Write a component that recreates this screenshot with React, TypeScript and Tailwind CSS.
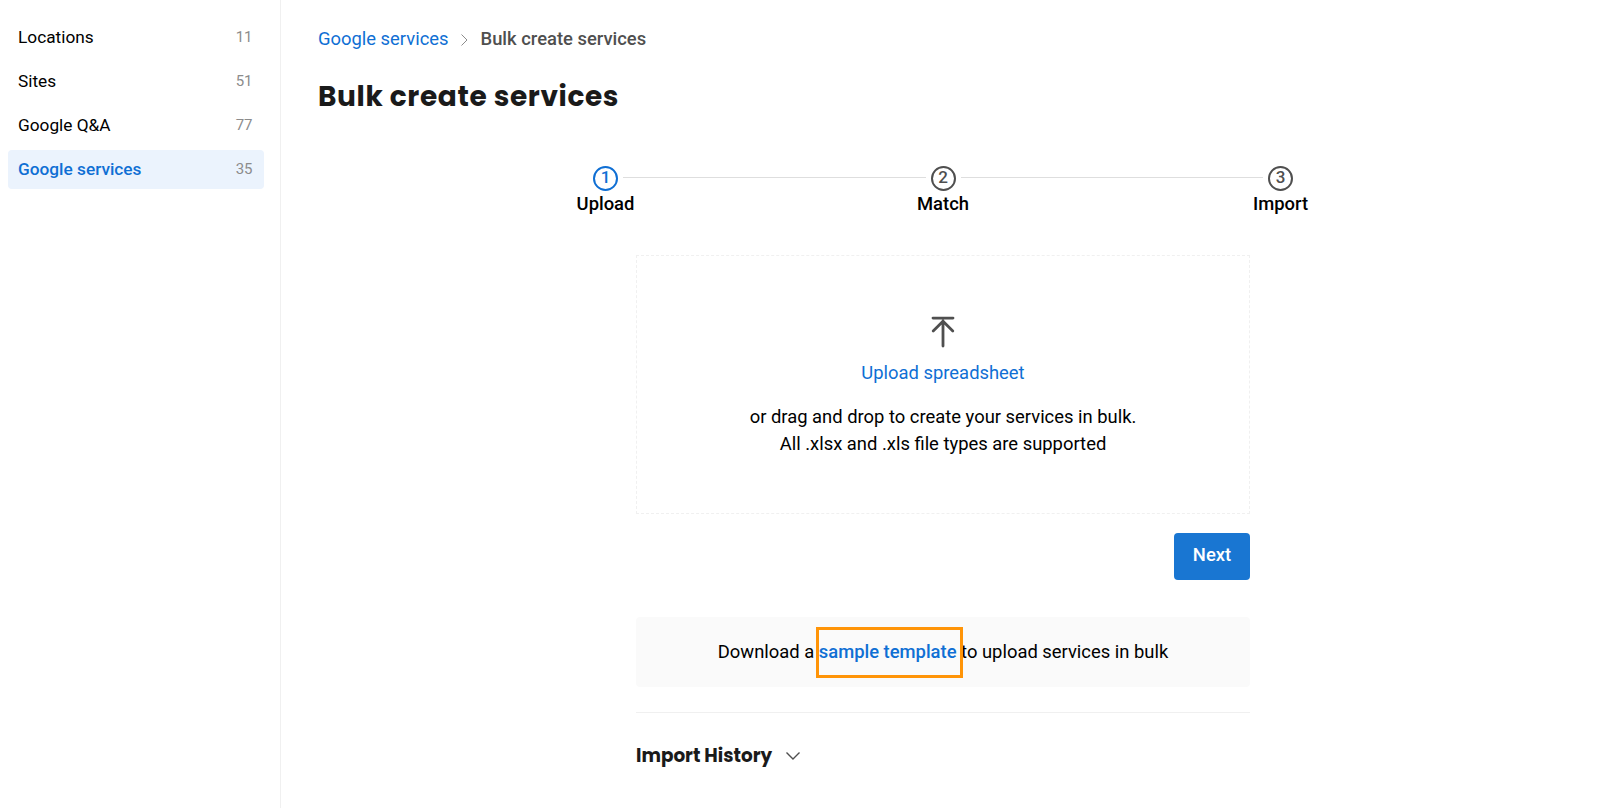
import { Fragment } from "react";
import clsx from "clsx";

const NAV_ITEMS = [
  { label: "Locations", count: 11 },
  { label: "Sites", count: 51 },
  { label: "Google Q&A", count: 77 },
  { label: "Google services", count: 35, active: true },
];

const STEPS = [
  { label: "Upload", active: true },
  { label: "Match", active: false },
  { label: "Import", active: false },
];

function Sidebar() {
  return (
    <aside className="w-[281px] shrink-0 border-r border-[#f0f0f0] pt-[18px] pr-4 pl-2">
      <nav className="flex flex-col gap-[5px]">
        {NAV_ITEMS.map((item) => (
          <a
            key={item.label}
            href="#"
            className={clsx(
              "flex h-[39px] items-center justify-between rounded pr-[11.5px] pl-2.5 text-[17.25px]",
              item.active ? "bg-[#ebf3fd] font-medium text-[#0f6fd4]" : "text-black",
            )}
          >
            <span>{item.label}</span>
            <span className="text-[15px] font-normal text-[#8c8c8c]">{item.count}</span>
          </a>
        ))}
      </nav>
    </aside>
  );
}

function Breadcrumbs() {
  return (
    <div className="flex h-6 items-center text-[18.4px]">
      <a href="#" className="text-[#0f6fd4]">
        Google services
      </a>
      <svg className="mx-[12.5px] mt-px h-3 w-[7px]" viewBox="0 0 7 12" fill="none" stroke="#8c8c8c">
        <path d="M0.5 0.5 6 6 0.5 11.5" />
      </svg>
      <span className="font-medium text-[#4f4f4f]">Bulk create services</span>
    </div>
  );
}

function Stepper() {
  return (
    <div className="-mx-[48px] flex items-start">
      {STEPS.map((step, index) => (
        <Fragment key={step.label}>
          {index > 0 && <div className="mt-[11px] h-px min-w-0 flex-1 bg-[#dedede]" />}
          <div className="mx-[5px] flex w-[25px] shrink-0 flex-col items-center">
            <div
              className={clsx(
                "flex size-[25px] items-center justify-center rounded-full border-2 pb-0.5 text-[17px] leading-none font-medium",
                step.active ? "border-[#0f6fd4] text-[#0f6fd4]" : "border-[#4f4f4f] text-[#4f4f4f]",
              )}
            >
              {index + 1}
            </div>
            <span className="text-[18.4px] leading-[26px] font-medium text-black">{step.label}</span>
          </div>
        </Fragment>
      ))}
    </div>
  );
}

function DropZone() {
  return (
    <div className="mt-[38px] flex h-[259px] flex-col items-center border border-dashed border-[#f0f0f0] pt-[59.5px] text-[18.4px]">
      <svg
        className="h-8 w-6"
        viewBox="0 0 24 32"
        fill="none"
        stroke="#4f4f4f"
        strokeWidth="2.8"
        strokeLinecap="round"
      >
        <path d="M2 2.1h20M12 5v25M2.2 15 12 5.2 21.8 15" />
      </svg>
      <a href="#" className="mt-[11.5px] leading-[27px] text-[#0f6fd4]">
        Upload spreadsheet
      </a>
      <p className="mt-[17px] text-center leading-[27px] text-black">
        or drag and drop to create your services in bulk.
        <br />
        All .xlsx and .xls file types are supported
      </p>
    </div>
  );
}

function SampleTemplate() {
  return (
    <div className="mt-[37px] flex h-[70px] items-center justify-center rounded bg-[#fafafa] text-[18.4px] whitespace-pre text-black">
      <span>Download a </span>
      <span className="relative">
        <a href="#" className="font-medium text-[#0f6fd4]">
          sample template
        </a>
        <span className="absolute -top-[11px] -right-[6px] -bottom-[12px] -left-[3px] border-3 border-[#ff9407]" />
      </span>
      <span> to upload services in bulk</span>
    </div>
  );
}

export default function App() {
  return (
    <div className="flex h-screen overflow-hidden bg-white font-['Roboto',sans-serif]">
      <Sidebar />
      <main className="flex-1 pt-[27px] pl-[37px]">
        <Breadcrumbs />
        <h1 className="mt-[25px] font-['Poppins','Inter',sans-serif] text-[28px] leading-[42px] font-bold tracking-[0.6px] whitespace-nowrap text-[#1a1a1a]">
          Bulk create services
        </h1>
        <div className="mt-[48px] ml-[318px] w-[614px]">
          <Stepper />
          <DropZone />
          <div className="mt-[19px] flex justify-end">
            <button className="h-[47px] w-[76px] rounded bg-[#1976d2] pb-[3px] text-[18.4px] font-medium text-white">
              Next
            </button>
          </div>
          <SampleTemplate />
          <div className="mt-[25px] border-t border-[#f0f0f0]" />
          <div className="mt-[29px] flex items-center">
            <h2 className="font-['Poppins','Inter',sans-serif] text-[18.4px] leading-7 font-bold text-[#1a1a1a]">
              Import History
            </h2>
            <svg className="ml-3.5 h-2 w-[14px]" viewBox="0 0 14 8" fill="none" stroke="#4f4f4f" strokeWidth="1.4">
              <path d="M0.5 0.5 7 7 13.5 0.5" />
            </svg>
          </div>
        </div>
      </main>
    </div>
  );
}
